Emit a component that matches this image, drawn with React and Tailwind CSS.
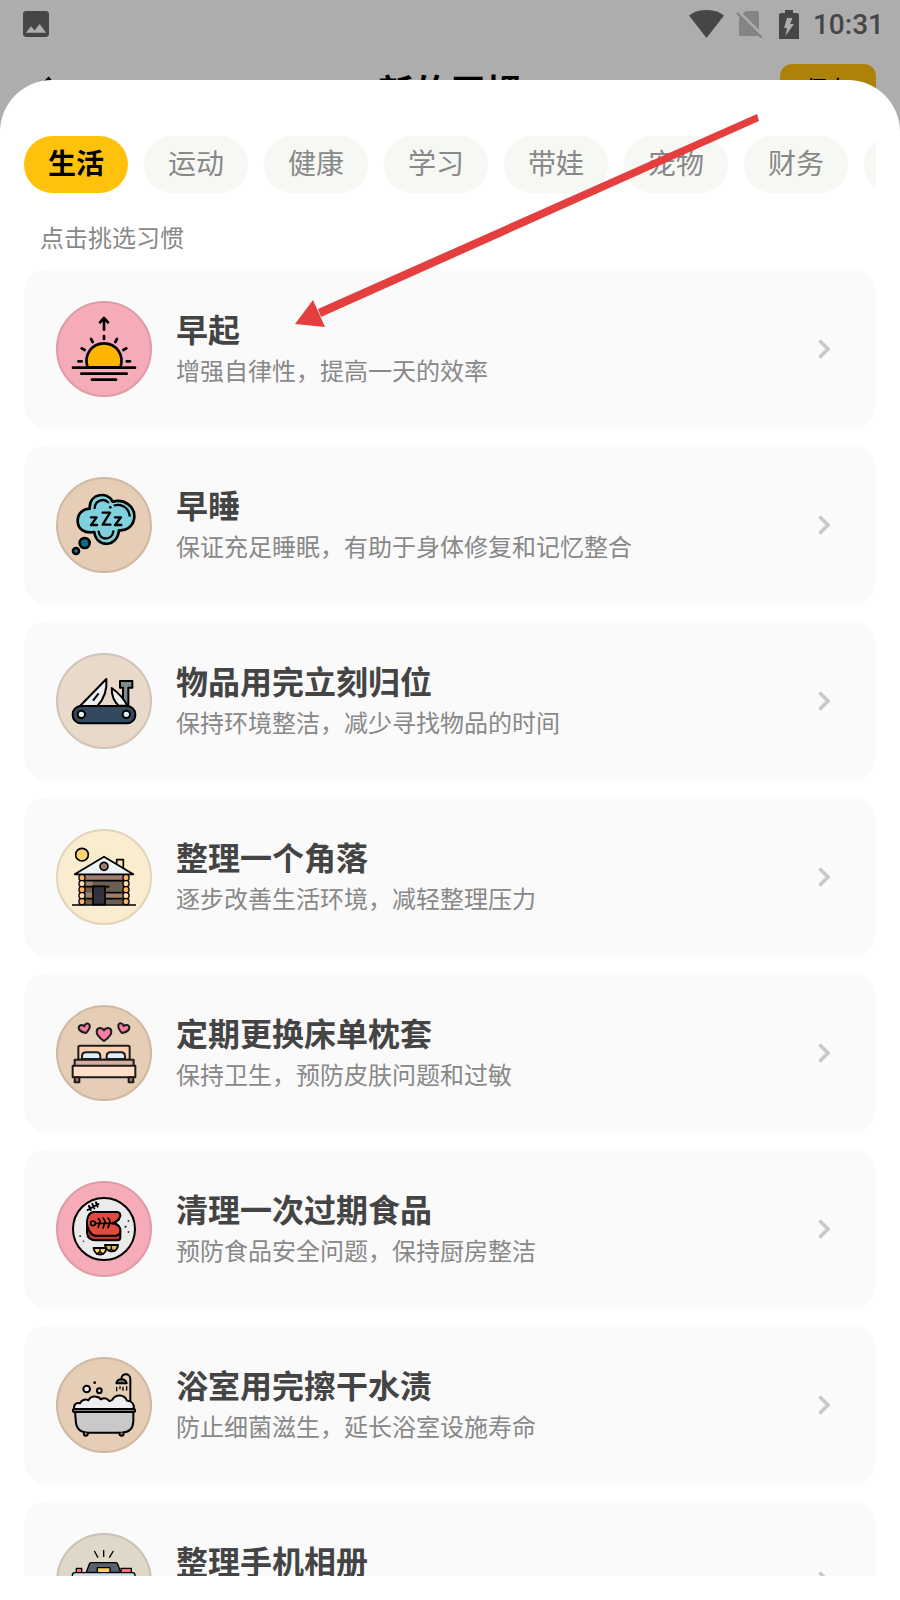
import React, { useState } from 'react';

const categories = ['生活', '运动', '健康', '学习', '带娃', '宠物', '财务', '社交'];

function Sunrise() {
  return (
    <g stroke="#000" strokeWidth="8" strokeLinecap="round" strokeLinejoin="round" fill="none">
      <path d="M180 119V85M168 97l12-13 12 13" />
      <path d="M180 138v9M141 147l5 9M219 147l-5 9M113 175l9 5M247 175l-9 5M103 214h10M248 214h10" />
      <path d="M131 232c-13-36 12-72 49-72s62 36 49 72z" fill="#ffb500" />
      <path d="M87 233h186M112 251h136M144 269h72" />
    </g>
  );
}

function Dream() {
  return (
    <g stroke="#000" strokeWidth="8" strokeLinecap="round" strokeLinejoin="round" fill="none">
      <path
        d="M137 128c-2-48 56-52 69-21 36-9 65 14 65 43 0 27-20 44-46 43-6 56-70 50-74 5-30 6-50-10-50-34 0-22 16-36 36-36z"
        fill="#7fd1de"
      />
      <path d="M152 126c1-24 28-30 40-17M212 118c20-5 42 6 45 31M164 197c3 27 40 28 44-1" strokeWidth="7" />
      <circle cx="199" cy="124" r="4" fill="#000" stroke="none" />
      <path d="M141 154h17l-17 23h18M176 140h22l-22 36h23M213 154h18l-18 23h19" strokeWidth="7" />
      <circle cx="122" cy="231" r="15" fill="#0a6a8c" />
      <circle cx="96" cy="255" r="9" fill="#1587a5" />
    </g>
  );
}

function PocketKnife() {
  return (
    <g stroke="#000" strokeWidth="6" strokeLinejoin="round" fill="none">
      <path d="M237 192v-55h-9v-20h37v20h-12v55z" fill="#7f8c8d" />
      <path d="M108 192l79-81c3 32-7 60-27 81z" fill="#ecf0f1" />
      <path d="M147 176l17-22M203 138c18 13 38 34 47 53h-26c-17-15-21-33-21-53z" fill="#ecf0f1" />
      <rect x="86" y="192" width="188" height="52" rx="25" fill="#34495e" />
      <circle cx="112" cy="217" r="11" fill="#e0f7fa" />
      <circle cx="247" cy="217" r="11" fill="#e0f7fa" />
    </g>
  );
}

function Cabin() {
  return (
    <g stroke="#000" strokeWidth="5" strokeLinejoin="round" fill="none">
      <circle cx="114" cy="110" r="19" fill="#fdd271" />
      <path d="M218 140v-15h20v27" fill="#fce3b0" />
      <path d="M122 169h116v91H122z" fill="#6b5f52" stroke="none" />
      <path d="M122 170h116v17H122zM182 224h56v17h-56zM122 188h24v17h-24zM122 224h24v17h-24z" fill="#a07f6e" stroke="none" />
      <path d="M122 188h116M122 206h74M184 224h52M184 242h52M122 242h24" />
      <path d="M92 169l88-53 88 53z" fill="#edf2f6" />
      <circle cx="180" cy="145" r="12" fill="#9c7a6b" />
      <path d="M147 260v-55h36v55z" fill="#32313d" />
      <g fill="#ffb062" strokeWidth="4">
        <rect x="105" y="170" width="18" height="18" rx="7" />
        <rect x="105" y="188" width="18" height="18" rx="7" fill="#ffdcab" />
        <rect x="105" y="206" width="18" height="18" rx="7" />
        <rect x="105" y="224" width="18" height="18" rx="7" fill="#ffdcab" />
        <rect x="105" y="242" width="18" height="18" rx="7" />
        <rect x="237" y="170" width="18" height="18" rx="7" />
        <rect x="237" y="188" width="18" height="18" rx="7" fill="#ffdcab" />
        <rect x="237" y="206" width="18" height="18" rx="7" />
        <rect x="237" y="224" width="18" height="18" rx="7" fill="#ffdcab" />
        <rect x="237" y="242" width="18" height="18" rx="7" />
      </g>
      <path d="M84 261h192" />
    </g>
  );
}

function Bed() {
  return (
    <g stroke="#1c1c1c" strokeWidth="6" strokeLinejoin="round" strokeLinecap="round" fill="none">
      <path d="M180 141c-17-12-23-20-22-29 1-12 16-14 22-3 6-11 21-9 22 3 1 9-5 17-22 29z" fill="#f27da5" />
      <path d="M126 117c-15-3-21-8-22-15 0-9 11-12 17-5 2-9 13-12 16-3 2 7-3 15-11 23z" fill="#f27da5" />
      <path d="M234 117c-8-8-12-17-11-24 3-8 14-6 16 3 7-6 18-3 17 6-1 7-7 12-22 15z" fill="#f27da5" />
      <path d="M103 197v-37q0-5 5-5h144q5 0 5 5v37z" fill="#fbd0b0" />
      <path d="M114 195v-8q0-12 12-12h31q12 0 12 12v8zM188 195v-8q0-12 12-12h31q12 0 12 12v8z" fill="#dbeefb" />
      <path d="M92 215v-18h177v18" fill="#d9ac9c" />
      <path d="M86 215h188v35H86z" fill="#ffdfc6" />
      <path d="M92 250h14v15H92zM254 250h14v15h-14z" fill="#a9725f" />
    </g>
  );
}

function Steak() {
  return (
    <g stroke="#000" strokeWidth="6" strokeLinejoin="round" strokeLinecap="round" fill="none">
      <circle cx="180" cy="177" r="93" fill="#ebebeb" />
      <path d="M131 120l32-18M135 108l5 12M145 102l6 13M156 97l5 13" strokeWidth="6" />
      <path d="M129 160v28q2 23 26 23h64q10 0 10-8v-20z" fill="#b83a30" />
      <path d="M149 126h71q10 2 9 13-5 12-17 19 12 7 17 18 2 21-15 21h-59c-31-3-36-69-6-71z" fill="#df4b3f" />
      <circle cx="147" cy="160" r="7" strokeWidth="5" />
      <path d="M155 160h46q14-2 24-11M201 160q15 1 24 9M163 146q8 6 4 14t-4 12M177 144q8 8 5 16t-5 14M192 144q8 8 5 16t-5 13" strokeWidth="5" />
      <path d="M183 225h39c-1 25-36 26-39 0z" fill="#e5b75c" />
      <path d="M149 234h38c-1 26-36 26-38 0z" fill="#ffd073" />
      <path d="M168 236v9l-10 7M168 245l9 7M202 230v7l8 6M202 237l-8 5" strokeWidth="4" />
      <g strokeWidth="5">
        <path d="M253 153h1M244 170h1M253 186h1M108 198h1" />
        <path d="M118 214h1" stroke="#7d5521" />
      </g>
    </g>
  );
}

function Bathtub() {
  return (
    <g stroke="#000" strokeWidth="6" strokeLinejoin="round" strokeLinecap="round" fill="none">
      <circle cx="128" cy="129" r="10" fill="#eee" />
      <circle cx="166" cy="134" r="7" fill="#eee" />
      <circle cx="152" cy="110" r="2" strokeWidth="4" />
      <path d="M259 169V99c0-19-27-19-27 0" />
      <path d="M217 112c3-16 27-17 31 0z" fill="#777" />
      <path d="M218 124v10M228 122v6M237 124v9M248 122v10" strokeWidth="4" />
      <path
        d="M91 190c-4-14 6-21 17-18 4-10 15-14 25-9 8-16 29-14 38-3 9-6 18-3 25 5 6-1 8-2 9-4 10-17 35-17 44 3 13-1 25 13 19 26z"
        fill="#eee"
      />
      <path d="M93 196h175v30q-1 33-35 34H131q-36-1-36-40z" fill="#c9c9c9" />
      <rect x="87" y="189" width="186" height="9" rx="3" fill="#888" />
      <path d="M120 260q-2 9 5 9t7-9M226 260q0 9 7 9t6-9" fill="#b5994a" />
    </g>
  );
}

function Camera() {
  return (
    <g stroke="#000" strokeWidth="4" strokeLinejoin="round" fill="none">
      <path d="M151 87l11 20M179 84v21M208 87l-12 20" />
      <path d="M97 151v-12h16v12M231 151v-12h31v12" fill="#ff6f72" />
      <path d="M127 151l9-25q1-4 5-4h75q4 0 5 4l9 25z" fill="#586172" />
      <path d="M160 151v-14h38v14" fill="#ffcc67" />
      <rect x="85" y="152" width="188" height="112" rx="8" fill="#d4dcf3" />
      <circle cx="179" cy="206" r="38" fill="#586172" />
    </g>
  );
}

const habits = [
  { title: '早起', desc: '增强自律性，提高一天的效率', Art: Sunrise, tint: 'bg-[#f5acb8] border-[#dc9ba6]' },
  { title: '早睡', desc: '保证充足睡眠，有助于身体修复和记忆整合', Art: Dream, tint: 'bg-[#e6cdb5] border-[#cfb8a3]' },
  { title: '物品用完立刻归位', desc: '保持环境整洁，减少寻找物品的时间', Art: PocketKnife, tint: 'bg-[#e8d9cb] border-[#d1c3b7]' },
  { title: '整理一个角落', desc: '逐步改善生活环境，减轻整理压力', Art: Cabin, tint: 'bg-[#faeccf] border-[#e1d4ba]' },
  { title: '定期更换床单枕套', desc: '保持卫生，预防皮肤问题和过敏', Art: Bed, tint: 'bg-[#e6cdb5] border-[#cfb8a3]' },
  { title: '清理一次过期食品', desc: '预防食品安全问题，保持厨房整洁', Art: Steak, tint: 'bg-[#f5acb8] border-[#dc9ba6]' },
  { title: '浴室用完擦干水渍', desc: '防止细菌滋生，延长浴室设施寿命', Art: Bathtub, tint: 'bg-[#e6cdb5] border-[#cfb8a3]' },
  { title: '整理手机相册', desc: '释放手机空间，方便查找照片', Art: Camera, tint: 'bg-[#dfd7c8] border-[#c9c2b4]' },
];

function StatusBar() {
  return (
    <div className="flex h-12 items-center justify-between pl-[23px] pr-4 text-[#464646]">
      <svg className="size-[26px]" viewBox="3 3 18 18" fill="currentColor">
        <path d="M21 19V5c0-1.100-.9-2-2-2H5c-1.100 0-2 .9-2 2v14c0 1.100.9 2 2 2h14c1.100 0 2-.9 2-2zM8.500 13.500l2.500 3.010L14.500 12l4.500 6H5l3.500-4.500z" />
      </svg>
      <div className="flex items-center">
        <svg className="h-7 w-[35px]" viewBox="0 0 35 28" fill="currentColor">
          <path d="M0 5.500C10-1.800 25-1.800 35 5.500L17.500 28z" />
        </svg>
        <svg className="ml-3 h-7 w-[27px]" viewBox="0 0 27 28" fill="none">
          <path d="M10 1h11q2 0 2 2v21q0 2-2 2H5q-2 0-2-2V7z" fill="#848484" />
          <path d="M2.500 1.500l25 25" stroke="#adadad" strokeWidth="3" />
          <path d="M1 3l25 25" stroke="#848484" strokeWidth="2.200" />
        </svg>
        <svg className="ml-4 h-[29px] w-5" viewBox="0 0 20 29" fill="currentColor">
          <path fillRule="evenodd" d="M6 0h8v3h4q2 0 2 2v24H0V5q0-2 2-2h4zM8 8h5.500l-2.500 6h4L6.500 26l1.500-8H5z" />
        </svg>
        <span className="ml-3.5 pt-0.5 font-[Roboto] text-[28px] leading-8 font-medium">10:31</span>
      </div>
    </div>
  );
}

function HabitCard({ title, desc, Art, tint }) {
  return (
    <li>
      <button type="button" className="flex h-40 w-full items-center rounded-3xl bg-[#fafafa] px-8 text-left">
        <span className={`size-24 shrink-0 overflow-hidden rounded-full border-2 ${tint}`}>
          <svg className="-m-0.5 size-24 max-w-none" viewBox="36 33 288 288">
            <Art />
          </svg>
        </span>
        <span className="ml-6 flex min-w-0 flex-1 flex-col pb-1.5">
          <span className="text-[32px] leading-12 font-bold text-[#444]">{title}</span>
          <span className="text-2xl leading-9 text-[#888]">{desc}</span>
        </span>
        <svg className="mr-3.5 h-5 w-3 shrink-0" viewBox="0 0 12 20" fill="none" stroke="#c8c8c8" strokeWidth="3.500">
          <path d="M1.500 1.500L10 10l-8.500 8.500" />
        </svg>
      </button>
    </li>
  );
}

export default function App() {
  const [active, setActive] = useState('生活');

  return (
    <div className="relative h-screen overflow-hidden bg-[#adadad] font-['Noto_Sans_CJK_SC',sans-serif]">
      <StatusBar />
      <header className="mt-4 grid grid-cols-3 items-center px-6">
        <button type="button" aria-label="返回" className="pl-2">
          <svg className="size-7" viewBox="0 0 28 28" fill="none" stroke="#000" strokeWidth="4">
            <path d="M18 2L6 14l12 12" />
          </svg>
        </button>
        <h1 className="text-center text-4xl leading-[52px] font-bold text-black">新的习惯</h1>
        <button type="button" className="h-[52px] w-24 justify-self-end rounded-xl bg-[#ad8208] pb-1 text-2xl text-black">
          保存
        </button>
      </header>

      <section className="absolute inset-x-0 top-20 bottom-0 flex flex-col rounded-t-[52px] bg-white px-6 pt-14 pb-6">
        <nav className="flex shrink-0 gap-4 overflow-hidden">
          {categories.map((name) => (
            <button
              key={name}
              type="button"
              onClick={() => setActive(name)}
              className={`h-[57px] w-[104px] shrink-0 rounded-full pb-1.5 text-[28px] leading-10 ${
                name === active ? 'bg-[#fec20c] font-bold text-black' : 'bg-[#f6f8f4] text-[#888]'
              }`}
            >
              {name}
            </button>
          ))}
        </nav>
        <p className="px-4 pt-[26px] pb-3.5 text-2xl leading-9 text-[#888]">点击挑选习惯</p>
        <ul className="flex min-h-0 flex-1 flex-col gap-4 overflow-y-auto [scrollbar-width:none]">
          {habits.map((habit) => (
            <HabitCard key={habit.title} {...habit} />
          ))}
        </ul>
      </section>

      {/* pointer to the first habit */}
      <svg className="pointer-events-none absolute top-28 left-[294px] h-56 w-[468px]" viewBox="294 112 468 224" fill="#e53e3e">
        <path d="M757 114l2 7L321 317l-3-8z" />
        <path d="M295 324l18-24 12 27z" />
      </svg>
    </div>
  );
}
